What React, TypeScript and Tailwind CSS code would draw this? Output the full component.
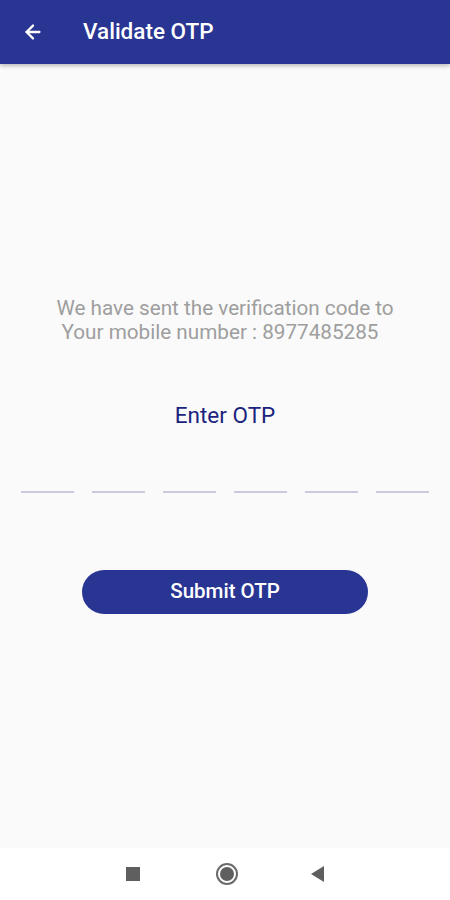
import { ArrowLeft } from "lucide-react";

export default function App() {
    const boxes = [0, 1, 2, 3, 4, 5];

    return (
        <div className="w-[450px] h-[900px] flex flex-col bg-[#fafafa] font-['Roboto',sans-serif] overflow-hidden">
            {/* App bar */}
            <header className="h-[64px] shrink-0 bg-[#283593] flex items-center px-[22px] shadow-[0_2px_4px_rgba(0,0,0,0.25)] z-10">
                <ArrowLeft className="w-[22px] h-[22px] text-white" strokeWidth={2.5} />
                <h1 className="ml-[39px] text-white text-[22.5px] font-medium">Validate OTP</h1>
            </header>

            {/* Content */}
            <main className="flex-1 flex flex-col items-center">
                <div className="mt-[232px] flex flex-col items-center text-[20.7px] leading-[24px] text-[#9e9e9e] whitespace-nowrap">
                    <span>We have sent the verification code to</span>
                    <span className="pr-[10px]">Your mobile number : 8977485285</span>
                </div>

                <p className="mt-[55px] text-[22.5px] text-[#1a237e]">Enter OTP</p>

                <div className="mt-[58px] w-full px-[21px] flex justify-between">
                    {boxes.map((b) => (
                        <div key={b} className="w-[53px] h-[2px] bg-[#c9cade]"></div>
                    ))}
                </div>

                <button className="mt-[77px] w-[286px] h-[44px] rounded-full bg-[#283593] text-white text-[20.5px] font-medium">
                    Submit OTP
                </button>
            </main>

            {/* Android nav bar */}
            <nav className="h-[52px] shrink-0 bg-white flex items-center justify-center">
                <div className="w-[14px] h-[14px] bg-[#5f5f5f]"></div>
                <div className="ml-[76px] w-[22px] h-[22px] rounded-full border-[2px] border-[#6b6b6b] flex items-center justify-center">
                    <div className="w-[14px] h-[14px] rounded-full bg-[#5f5f5f]"></div>
                </div>
                <svg className="ml-[73px]" width="14" height="16" viewBox="0 0 14 16">
                    <polygon points="13,0 13,16 0,8" fill="#5f5f5f" />
                </svg>
            </nav>
        </div>
    );
}
